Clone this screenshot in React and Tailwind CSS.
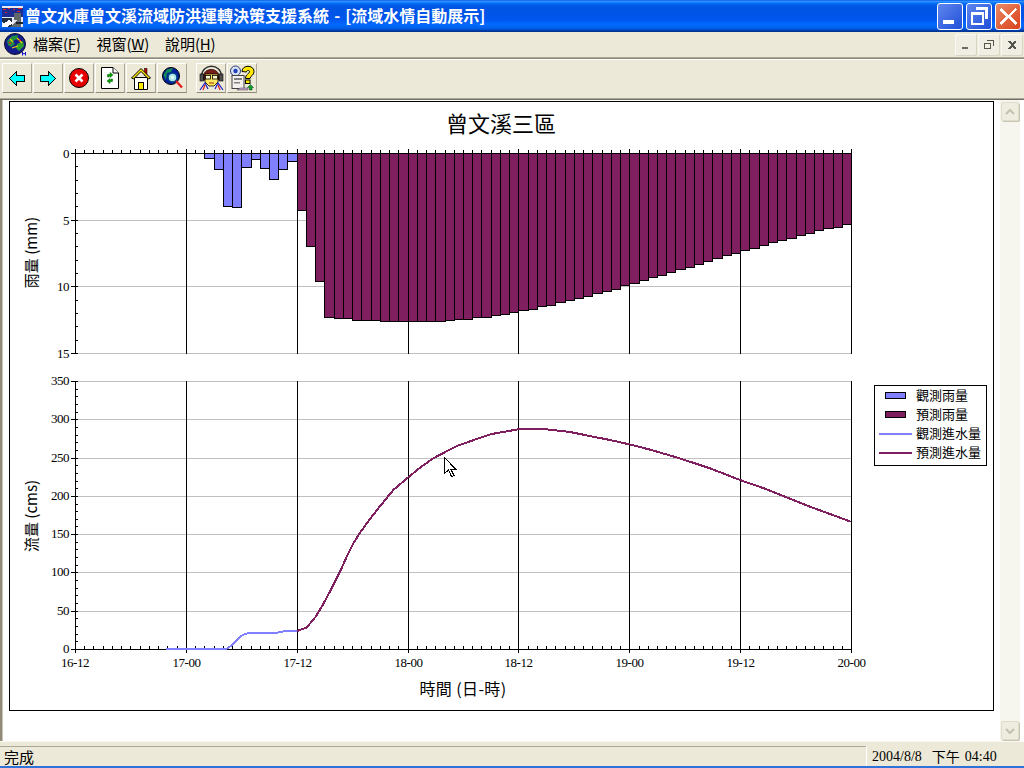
const CJK = "font-['Noto_Sans_CJK_TC','Liberation_Sans',sans-serif]";
const SERIF = "font-['Liberation_Serif',serif]";

const MAJORS = [12, 24, 36, 48, 60, 72, 84];
const LABELS = ["16-12", "17-00", "17-12", "18-00", "18-12", "19-00", "19-12", "20-00"];

// x pixel for hour k after 16-12
const edge = (k) => Math.round(75 + (k * 776) / 84) + 0.5;

// bottom edges of the rain bars, in page pixels
const OBSERVED = [158, 169, 206, 207, 167, 159, 168, 179, 169, 161];
const FORECAST = [
  210, 246, 281, 317, 318, 318, 320, 320, 320, 321, 321, 321, 321, 321, 321, 321, 320, 319, 319,
  317, 317, 315, 314, 312, 310, 309, 306, 305, 302, 300, 298, 296, 293, 291, 289, 285, 283, 280,
  277, 275, 272, 269, 267, 264, 261, 258, 255, 253, 250, 248, 245, 242, 240, 238, 235, 233, 230,
  228, 227, 224,
];

const OBSERVED_LINE = "166,649 226,649 231,646 236,641 241,636 245,634 252,632.5 278,632.5 285,631 297,631";
const FORECAST_LINE =
  "297,631 306.7,627.5 315.7,616.7 323.3,604 331.7,588.3 340,571.7 346.7,556.7 353.3,543.3 360.7,531.7 370,519 378.3,508.3 393.3,490 408.3,477.3 420,467.7 433.3,458.3 450,449.5 458.3,445.5 476.7,439 491.7,434 518.3,429.3 530,428.5 543.3,429 570,432 593.3,436.7 610,440 630,444.5 653.3,450.5 681.7,459 710,468.3 740,480 766.7,489.3 783.3,496 810,506.7 830,514 850.7,521.7";

const LEGEND = [
  { label: "觀測雨量", kind: "bar", color: "bg-[#8080ff]" },
  { label: "預測雨量", kind: "bar", color: "bg-[#801f60]" },
  { label: "觀測進水量", kind: "line", color: "bg-[#8080ff]" },
  { label: "預測進水量", kind: "line", color: "bg-[#801f60]" },
];

function ArrowIcon({ flip }) {
  return (
    <svg width="16" height="15" viewBox="0 0 16 15" className={flip ? "-scale-x-100" : ""}>
      <polygon points="0.5,7.5 7.5,0.5 7.5,4.5 15.5,4.5 15.5,10.5 7.5,10.5 7.5,14.5" fill="#00ffff" stroke="#000" shapeRendering="crispEdges" />
    </svg>
  );
}

function StopIcon() {
  return (
    <svg width="20" height="20" viewBox="0 0 20 20">
      <circle cx="10" cy="10" r="9.5" fill="#e60000" stroke="#000" />
      <path d="M6.5 6.5 13.5 13.5 M13.5 6.5 6.5 13.5" stroke="#fff" strokeWidth="2.6" />
    </svg>
  );
}

function RefreshDocIcon() {
  return (
    <svg width="18" height="22" viewBox="0 0 18 22">
      <path d="M0.5 0.5H12L17.5 6V21.5H0.5Z" fill="#fff" stroke="#000" />
      <path d="M12 0.5V6H17.5" fill="#fff" stroke="#000" />
      <path d="M6.5 10V7.5H9V5.5L12 8 9 10.5V9H8V10Z" fill="#00a000" stroke="#006000" strokeWidth="0.5" />
      <path d="M11.5 12V14.5H9V16.5L6 14 9 11.5V13H10V12Z" fill="#00a000" stroke="#006000" strokeWidth="0.5" />
    </svg>
  );
}

function HomeIcon() {
  return (
    <svg width="20" height="23" viewBox="0 0 20 23">
      <rect x="13.5" y="1.5" width="2.5" height="7" fill="#c00000" stroke="#000" strokeWidth="0.5" />
      <path d="M3.5 10.5H16.5V22.5H3.5Z" fill="#fff" stroke="#000" />
      <path d="M0.5 11 10 1.5 19.5 11 17.5 12 10 4.5 2.5 12Z" fill="#ffe800" stroke="#000" />
      <rect x="7.5" y="15.5" width="5" height="7" fill="#ffe800" stroke="#000" />
    </svg>
  );
}

function SearchGlobeIcon() {
  return (
    <svg width="21" height="22" viewBox="0 0 21 22">
      <circle cx="9" cy="9" r="8.5" fill="#0020a0" stroke="#000" />
      <path d="M1.5 8 5 2.5 11 1 9 5 5 6 4 13Z" fill="#109050" />
      <circle cx="10.5" cy="10.5" r="4.5" fill="#a8e8e8" stroke="#004080" strokeWidth="1.5" />
      <path d="M9 9H12V12H9Z" fill="#e0f8f8" />
      <path d="M14 14 20 20.5" stroke="#e02020" strokeWidth="2.4" />
    </svg>
  );
}

function AgentIcon() {
  return (
    <svg width="25" height="26" viewBox="0 0 25 26">
      <path d="M2.5 11C3 -2 22 -2 22.5 11" fill="none" stroke="#303030" strokeWidth="1.4" />
      <path d="M4.5 12C4 2 20.5 2 20 12V15H4.5Z" fill="#7a1c1c" stroke="#200" strokeWidth="0.8" />
      <rect x="1" y="9" width="3.5" height="7" fill="#505050" stroke="#000" strokeWidth="0.6" />
      <rect x="20.5" y="9" width="3.5" height="7" fill="#505050" stroke="#000" strokeWidth="0.6" />
      <path d="M6 9H19V17L15 21H10L6 17Z" fill="#ffe860" stroke="#000" strokeWidth="0.8" />
      <rect x="6.5" y="10.5" width="5" height="3.5" fill="#fff8d0" stroke="#000" strokeWidth="0.8" />
      <rect x="13.5" y="10.5" width="5" height="3.5" fill="#fff8d0" stroke="#000" strokeWidth="0.8" />
      <path d="M10 18H15" stroke="#a03000" />
      <path d="M1 25 6 18 9 24 M24 25 19 18 16 24" fill="none" stroke="#2020c0" strokeWidth="1.2" />
      <path d="M4 25 6 20 M21 25 19 20" stroke="#e02020" strokeWidth="1.2" />
    </svg>
  );
}

function HelpIcon() {
  return (
    <svg width="26" height="26" viewBox="0 0 26 26">
      <circle cx="6.5" cy="6" r="5" fill="#d8e0f0" stroke="#304080" />
      <circle cx="6.5" cy="6" r="2.2" fill="#2040c0" />
      <rect x="3" y="10.5" width="12" height="13" fill="#f4f0f0" stroke="#404040" />
      <rect x="5" y="13" width="8" height="2" fill="#808080" />
      <rect x="5" y="17" width="6" height="1.5" fill="#808080" />
      <path d="M11 23H19V25H8Z" fill="#c8a0d0" stroke="#404040" strokeWidth="0.5" />
      <path d="M13 6.5C13 -0.5 25 -0.5 25 6.5 25 10.5 21.5 10.5 21 13.5H16.5C16.5 9 20.5 9 20.5 6.5 20.5 5 17.5 5 17.5 7Z" fill="#ffe800" stroke="#000" />
      <rect x="16.5" y="15" width="4.5" height="3.5" fill="#ffe800" stroke="#000" />
      <path d="M21.5 19.5 24.5 22.5H23V25H20.5V22.5H18.5Z" fill="#10a030" stroke="#004010" strokeWidth="0.5" />
    </svg>
  );
}

function AppLogo() {
  return (
    <svg width="21" height="21" viewBox="0 0 21 21" shapeRendering="crispEdges">
      <rect x="0" y="0" width="21" height="21" fill="#e8e8f0" />
      <rect x="0" y="2" width="21" height="9" fill="#1c2c90" />
      <path d="M1 3H4M6 2H8M11 3H13M16 2H20M3 6H5M15 5H18" stroke="#e02030" />
      <path d="M0 12H10V21H7L0 16Z" fill="#203040" />
      <path d="M12 7H19V21H8L15 14H12Z" fill="#60686c" />
      <path d="M0 19 7 14 11 17 5 21H0Z" fill="#fff" />
      <path d="M14 16H21V18H14Z" fill="#20242c" />
    </svg>
  );
}

function GlobeIcon() {
  return (
    <svg width="23" height="23" viewBox="0 0 23 23">
      <circle cx="11" cy="11" r="10.5" fill="#141c8c" stroke="#101030" />
      <path d="M3 8 8 3 14 2 13 6 9 8 11 11 7 14 4 12Z" fill="#1f8f3f" />
      <path d="M13 11 19 8 20 13 15 18 12 15Z" fill="#2f9f2f" />
      <path d="M6 6 9 9 M13 5 18 10 M8 15 14 13" stroke="#f4d000" strokeWidth="1.2" />
      <path d="M5 9 7 11 M15 8 17 7" stroke="#e02020" strokeWidth="1.2" />
      <path d="M18.5 19V22.5M21.5 19V22.5M18.5 20.7H21.5" stroke="#1010d0" strokeWidth="1" />
    </svg>
  );
}

function MenuItem({ label, letter }) {
  return (
    <span className="whitespace-nowrap">
      {label}
      <span className="tracking-[-0.3px]">
        (<span className="underline">{letter}</span>)
      </span>
    </span>
  );
}

function MdiButton({ children }) {
  return (
    <div className="flex h-[22px] w-[22px] items-center justify-center rounded-[2px] bg-[#f0eee2] shadow-[inset_-1px_-1px_0_#d8d5c4,inset_1px_1px_0_#fafaf5]">
      <svg width="12" height="12" viewBox="0 0 12 12" shapeRendering="crispEdges">
        {children}
      </svg>
    </div>
  );
}

function ToolButton({ children, className = "" }) {
  return (
    <button className={`flex h-[30px] w-[30px] items-center justify-center border border-t-white border-l-white border-r-[#aca899] border-b-[#8f8b78] bg-[#ece9d8] ${className}`}>
      {children}
    </button>
  );
}

function WindowButton({ color, children }) {
  return (
    <div className={`flex h-[27px] w-[26px] items-center justify-center rounded-[3px] border border-white ${color}`}>
      <svg width="22" height="22" viewBox="0 0 22 22" shapeRendering="crispEdges">
        {children}
      </svg>
    </div>
  );
}

function ScrollArrow({ d }) {
  return (
    <div className="flex h-[19px] w-[18px] items-center justify-center rounded-[2px] border border-[#dedbc8] bg-[#efede0] shadow-[1px_1px_0_#c8c5b4]">
      <svg width="10" height="8" viewBox="0 0 10 8">
        <path d={d} fill="none" stroke="#c4c1ae" strokeWidth="2" />
      </svg>
    </div>
  );
}

function AxisText({ x, y, anchor = "end", children }) {
  return (
    <text x={x} y={y} textAnchor={anchor} className={`fill-black text-[13px] tracking-[-0.5px] ${SERIF}`}>
      {children}
    </text>
  );
}

function Chart() {
  const hours = Array.from({ length: 85 }, (_, k) => k);
  const rainTicks = Array.from({ length: 16 }, (_, v) => 153.5 + Math.round((v * 200) / 15));
  const flowTicks = Array.from({ length: 36 }, (_, v) => 649.5 - Math.round((v * 268) / 35));
  const flowGrid = [1, 2, 3, 4, 5, 6, 7].map((i) => 649.5 - Math.round((i * 268) / 7));

  return (
    <svg width="983" height="608" viewBox="10 102 983 608" className="block">
      <g shapeRendering="crispEdges" strokeWidth="1">
        {/* gridlines */}
        {[220.5, 286.5, 353.5].map((y) => (
          <line key={y} x1="75" x2="852" y1={y} y2={y} stroke="#c0c0c0" />
        ))}
        {flowGrid.map((y) => (
          <line key={y} x1="75" x2="852" y1={y} y2={y} stroke="#c0c0c0" />
        ))}
        {MAJORS.map((k) => (
          <g key={k}>
            <line x1={edge(k)} x2={edge(k)} y1="149" y2="354" stroke="#000" />
            <line x1={edge(k)} x2={edge(k)} y1="381" y2="653" stroke="#000" />
          </g>
        ))}

        {/* rain bars */}
        {OBSERVED.map((b, i) => (
          <rect key={i} x={edge(14 + i)} y="153.5" width={edge(15 + i) - edge(14 + i)} height={b - 153} fill="#8080ff" stroke="#000" />
        ))}
        {FORECAST.map((b, i) => (
          <rect key={i} x={edge(24 + i)} y="153.5" width={edge(25 + i) - edge(24 + i)} height={b - 153} fill="#801f60" stroke="#000" />
        ))}

        {/* axes and ticks */}
        <line x1="71" x2="852" y1="153.5" y2="153.5" stroke="#000" />
        <line x1="71" x2="852" y1="649.5" y2="649.5" stroke="#000" />
        <line x1="75.5" x2="75.5" y1="149" y2="354" stroke="#000" />
        <line x1="75.5" x2="75.5" y1="381" y2="653" stroke="#000" />
        {hours.map((k) => (
          <g key={k}>
            <line x1={edge(k)} x2={edge(k)} y1="150" y2="153" stroke="#000" />
            <line x1={edge(k)} x2={edge(k)} y1="646" y2="649" stroke="#000" />
          </g>
        ))}
        {rainTicks.map((y) => (
          <line key={y} x1="75" x2="78" y1={y} y2={y} stroke="#000" />
        ))}
        {flowTicks.map((y) => (
          <line key={y} x1="75" x2="78" y1={y} y2={y} stroke="#000" />
        ))}
        {[220.5, 286.5, 353.5, ...flowGrid].map((y) => (
          <line key={y} x1="71" x2="75" y1={y} y2={y} stroke="#000" />
        ))}

        {/* inflow curves */}
        <polyline points={OBSERVED_LINE} fill="none" stroke="#8080ff" strokeWidth="2" />
        <polyline points={FORECAST_LINE} fill="none" stroke="#801f60" strokeWidth="2" />
      </g>

      {/* axis labels */}
      <text x="501" y="132" textAnchor="middle" className={`fill-black text-[22px] ${CJK}`}>曾文溪三區</text>
      <AxisText x="69" y="158">0</AxisText>
      <AxisText x="69" y="225">5</AxisText>
      <AxisText x="69" y="291">10</AxisText>
      <AxisText x="69" y="358">15</AxisText>
      {[0, 50, 100, 150, 200, 250, 300, 350].map((v, i) => (
        <AxisText key={v} x="69" y={653 - Math.round((i * 268) / 7)}>{v}</AxisText>
      ))}
      {LABELS.map((t, i) => (
        <AxisText key={t} x={i === 0 ? 75 : edge(i * 12)} y="667" anchor="middle">{t}</AxisText>
      ))}
      <text x="463" y="695" textAnchor="middle" className={`fill-black text-[16px] tracking-[0.4px] ${CJK}`}>時間 (日-時)</text>
      <text transform="translate(37 252.5) rotate(-90)" textAnchor="middle" className={`fill-black text-[15px] ${CJK}`}>雨量 (mm)</text>
      <text transform="translate(37 516) rotate(-90)" textAnchor="middle" className={`fill-black text-[15px] ${CJK}`}>流量 (cms)</text>

      {/* mouse pointer left in the shot */}
      <path d="M444.5 457.5V473.5L448.5 470 451.5 476.5 454 475.5 451 469.5 456 469.5Z" fill="#fff" stroke="#000" shapeRendering="crispEdges" />
    </svg>
  );
}

function Legend() {
  return (
    <div className={`absolute left-[864px] top-[283px] flex h-[81px] w-[113px] flex-col border border-black bg-white text-[13px] leading-[19px] text-black ${CJK}`}>
      {LEGEND.map((item) => (
        <div key={item.label} className="flex h-[19px] items-center">
          <div className="flex w-[41px] justify-center">
            {item.kind === "bar" ? (
              <div className={`h-[7px] w-[21px] border border-black ${item.color}`} />
            ) : (
              <div className={`h-[2px] w-[33px] ${item.color}`} />
            )}
          </div>
          <span className="-translate-y-px whitespace-nowrap">{item.label}</span>
        </div>
      ))}
    </div>
  );
}

export default function App() {
  return (
    <div className={`flex h-[768px] w-[1024px] flex-col overflow-hidden bg-[#ece9d8] ${CJK}`}>
      {/* title bar */}
      <div className="flex h-[32px] shrink-0 items-center bg-[linear-gradient(180deg,#0058ee_0%,#3593ff_4%,#288eff_6%,#127dff_8%,#036ffc_10%,#0262ee_14%,#0057e5_20%,#0054e3_24%,#0055eb_56%,#005bf5_66%,#026afe_76%,#0062ef_86%,#0052d6_92%,#0040ab_94%,#003092_100%)] pl-[2px] pr-[3px]">
        <AppLogo />
        <span className="ml-[2px] -translate-y-[1.5px] whitespace-nowrap text-[16px] font-bold text-white [word-spacing:1.5px]">
          曾文水庫曾文溪流域防洪運轉決策支援系統 - [流域水情自動展示]
        </span>
        <div className="ml-auto flex gap-[3px]">
          <WindowButton color="bg-[linear-gradient(135deg,#5f86ee,#1f4fd8)]">
            <rect x="4" y="15" width="11" height="4" fill="#fff" />
          </WindowButton>
          <WindowButton color="bg-[linear-gradient(135deg,#5f86ee,#1f4fd8)]">
            <path d="M8 2H20V14H17V5H8Z M3 7H16V20H3Z M5 10V18H14V10Z" fill="#fff" fillRule="evenodd" />
          </WindowButton>
          <WindowButton color="bg-[linear-gradient(135deg,#ea8a66,#d9421a)]">
            <path d="M4 3 11 10 18 3 20 5 13 11 20 18 18 20 11 13 4 20 2 18 9 11 2 5Z" fill="#fff" />
          </WindowButton>
        </div>
      </div>

      {/* menu bar */}
      <div className="flex h-[25px] shrink-0 items-center pl-[4px] pr-[1px] text-[15px] text-black">
        <GlobeIcon />
        <div className="ml-[6px] flex gap-[16px]">
          <MenuItem label="檔案" letter="F" />
          <MenuItem label="視窗" letter="W" />
          <MenuItem label="說明" letter="H" />
        </div>
        <div className="ml-auto flex gap-px">
          <MdiButton>
            <rect x="2" y="8" width="6" height="2" fill="#6b6b60" />
          </MdiButton>
          <MdiButton>
            <path d="M3.5 1.5H10.5V6.5M1.5 4.5H7.5V9.5H1.5Z" fill="none" stroke="#55554c" />
          </MdiButton>
          <MdiButton>
            <path d="M2 2H4L6 4 8 2H10V3L7 6 10 9V10H8L6 8 4 10H2V9L5 6 2 3Z" fill="#55554c" />
          </MdiButton>
        </div>
      </div>

      {/* toolbar */}
      <div className="flex h-[43px] shrink-0 flex-col">
        <div className="h-[1px] bg-[#aca899]" />
        <div className="h-[1px] bg-[#8f8b78]" />
        <div className="h-[1px] bg-white" />
        <div className="flex flex-1 gap-px pl-[2px] pt-[3px]">
          <ToolButton><ArrowIcon /></ToolButton>
          <ToolButton><ArrowIcon flip /></ToolButton>
          <ToolButton><StopIcon /></ToolButton>
          <ToolButton><RefreshDocIcon /></ToolButton>
          <ToolButton><HomeIcon /></ToolButton>
          <ToolButton><SearchGlobeIcon /></ToolButton>
          <ToolButton className="ml-[8px]"><AgentIcon /></ToolButton>
          <ToolButton><HelpIcon /></ToolButton>
        </div>
        <div className="h-[1px] bg-[#aca899]" />
        <div className="h-[1px] bg-[#716f64]" />
      </div>

      {/* page area */}
      <div className="flex h-[641px] shrink-0 bg-white">
        <div className="w-[3px] border-r border-[#c8c5b4] bg-[#8f8b78]" />
        <div className="flex flex-1 pl-[6px] pt-[1px]">
          <div className="relative h-[610px] w-[985px] border border-black bg-white">
            <Chart />
            <Legend />
          </div>
        </div>
        <div className="mr-[4px] flex w-[20px] flex-col items-center justify-between bg-[#f6f5ee] pb-[1px] pt-[2px]">
          <ScrollArrow d="M1 6 5 2 9 6" />
          <ScrollArrow d="M1 2 5 6 9 2" />
        </div>
      </div>

      {/* status bar */}
      <div className="h-[5px] shrink-0 border-t border-[#f8f7f2]" />
      <div className="flex h-[20px] shrink-0 text-[15px] leading-[19px] text-black">
        <div className="flex-1 border-t border-[#aca899] pl-[4px]">完成</div>
        <div className="flex w-[158px] items-center whitespace-nowrap border-l border-white pl-[5px] text-[14px]">
          <span className={SERIF}>2004/8/8</span>
          <span className="ml-[10px]">下午</span>
          <span className={`ml-[5px] ${SERIF}`}>04:40</span>
        </div>
      </div>
      <div className="h-[2px] shrink-0 bg-[#2f72d8]" />
    </div>
  );
}
